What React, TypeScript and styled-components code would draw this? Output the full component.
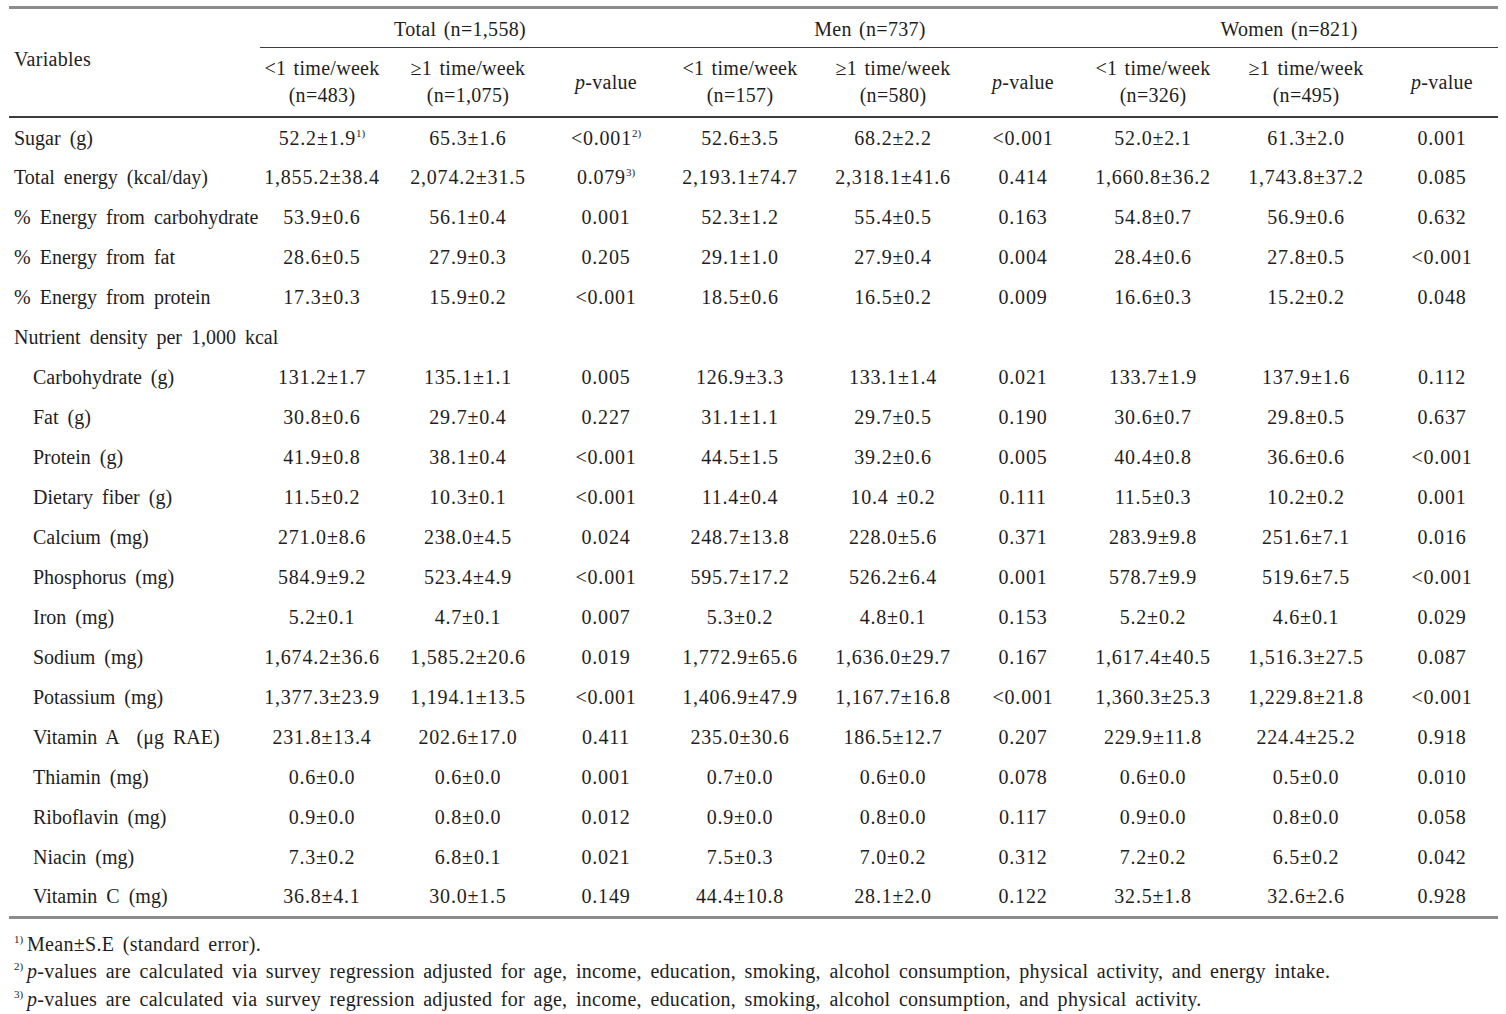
import { FC } from 'react';
import styled, { createGlobalStyle } from 'styled-components';

const GlobalStyle = createGlobalStyle`
  html, body {
    margin: 0;
    padding: 0;
    background: #ffffff;
  }
  body {
    font-family: 'Liberation Serif', 'Times New Roman', serif;
    color: #1e1e1e;
  }
`;

type Cell = { v: string; sup?: string };
type Row = { label: string; indent?: boolean; section?: boolean; cells?: Cell[] };

const c = (v: string, sup?: string): Cell => ({ v, sup });
const r = (label: string, vals: string[], indent = false): Row => ({
  label,
  indent,
  cells: vals.map((v) => c(v)),
});

const rows: Row[] = [
  {
    label: 'Sugar (g)',
    cells: [
      c('52.2±1.9', '1)'),
      c('65.3±1.6'),
      c('<0.001', '2)'),
      c('52.6±3.5'),
      c('68.2±2.2'),
      c('<0.001'),
      c('52.0±2.1'),
      c('61.3±2.0'),
      c('0.001'),
    ],
  },
  {
    label: 'Total energy (kcal/day)',
    cells: [
      c('1,855.2±38.4'),
      c('2,074.2±31.5'),
      c('0.079', '3)'),
      c('2,193.1±74.7'),
      c('2,318.1±41.6'),
      c('0.414'),
      c('1,660.8±36.2'),
      c('1,743.8±37.2'),
      c('0.085'),
    ],
  },
  r('% Energy from carbohydrate', ['53.9±0.6', '56.1±0.4', '0.001', '52.3±1.2', '55.4±0.5', '0.163', '54.8±0.7', '56.9±0.6', '0.632']),
  r('% Energy from fat', ['28.6±0.5', '27.9±0.3', '0.205', '29.1±1.0', '27.9±0.4', '0.004', '28.4±0.6', '27.8±0.5', '<0.001']),
  r('% Energy from protein', ['17.3±0.3', '15.9±0.2', '<0.001', '18.5±0.6', '16.5±0.2', '0.009', '16.6±0.3', '15.2±0.2', '0.048']),
  { label: 'Nutrient density per 1,000 kcal', section: true },
  r('Carbohydrate (g)', ['131.2±1.7', '135.1±1.1', '0.005', '126.9±3.3', '133.1±1.4', '0.021', '133.7±1.9', '137.9±1.6', '0.112'], true),
  r('Fat (g)', ['30.8±0.6', '29.7±0.4', '0.227', '31.1±1.1', '29.7±0.5', '0.190', '30.6±0.7', '29.8±0.5', '0.637'], true),
  r('Protein (g)', ['41.9±0.8', '38.1±0.4', '<0.001', '44.5±1.5', '39.2±0.6', '0.005', '40.4±0.8', '36.6±0.6', '<0.001'], true),
  r('Dietary fiber (g)', ['11.5±0.2', '10.3±0.1', '<0.001', '11.4±0.4', '10.4 ±0.2', '0.111', '11.5±0.3', '10.2±0.2', '0.001'], true),
  r('Calcium (mg)', ['271.0±8.6', '238.0±4.5', '0.024', '248.7±13.8', '228.0±5.6', '0.371', '283.9±9.8', '251.6±7.1', '0.016'], true),
  r('Phosphorus (mg)', ['584.9±9.2', '523.4±4.9', '<0.001', '595.7±17.2', '526.2±6.4', '0.001', '578.7±9.9', '519.6±7.5', '<0.001'], true),
  r('Iron (mg)', ['5.2±0.1', '4.7±0.1', '0.007', '5.3±0.2', '4.8±0.1', '0.153', '5.2±0.2', '4.6±0.1', '0.029'], true),
  r('Sodium (mg)', ['1,674.2±36.6', '1,585.2±20.6', '0.019', '1,772.9±65.6', '1,636.0±29.7', '0.167', '1,617.4±40.5', '1,516.3±27.5', '0.087'], true),
  r('Potassium (mg)', ['1,377.3±23.9', '1,194.1±13.5', '<0.001', '1,406.9±47.9', '1,167.7±16.8', '<0.001', '1,360.3±25.3', '1,229.8±21.8', '<0.001'], true),
  r('Vitamin A \u00a0(μg RAE)', ['231.8±13.4', '202.6±17.0', '0.411', '235.0±30.6', '186.5±12.7', '0.207', '229.9±11.8', '224.4±25.2', '0.918'], true),
  r('Thiamin (mg)', ['0.6±0.0', '0.6±0.0', '0.001', '0.7±0.0', '0.6±0.0', '0.078', '0.6±0.0', '0.5±0.0', '0.010'], true),
  r('Riboflavin (mg)', ['0.9±0.0', '0.8±0.0', '0.012', '0.9±0.0', '0.8±0.0', '0.117', '0.9±0.0', '0.8±0.0', '0.058'], true),
  r('Niacin (mg)', ['7.3±0.2', '6.8±0.1', '0.021', '7.5±0.3', '7.0±0.2', '0.312', '7.2±0.2', '6.5±0.2', '0.042'], true),
  r('Vitamin C (mg)', ['36.8±4.1', '30.0±1.5', '0.149', '44.4±10.8', '28.1±2.0', '0.122', '32.5±1.8', '32.6±2.6', '0.928'], true),
];

// column widths: variables, then 3 groups of (<1, >=1, p)
const colWidths = [251, 124, 168, 108, 160, 146, 114, 146, 160, 112];

const groups = [
  { title: 'Total (n=1,558)', lo: '(n=483)', hi: '(n=1,075)' },
  { title: 'Men (n=737)', lo: '(n=157)', hi: '(n=580)' },
  { title: 'Women (n=821)', lo: '(n=326)', hi: '(n=495)' },
];

const notes = [
  { n: '1)', text: <>Mean±S.E (standard error).</> },
  {
    n: '2)',
    text: (
      <>
        <i>p</i>-values are calculated via survey regression adjusted for age, income, education, smoking,
        alcohol consumption, physical activity, and energy intake.
      </>
    ),
  },
  {
    n: '3)',
    text: (
      <>
        <i>p</i>-values are calculated via survey regression adjusted for age, income, education, smoking,
        alcohol consumption, and physical activity.
      </>
    ),
  },
];

const App: FC = () => (
  <>
    <GlobalStyle />
    <Page>
      <Table>
        <colgroup>
          {colWidths.map((w, i) => (
            <col key={i} style={{ width: w }} />
          ))}
        </colgroup>
        <thead>
          <tr>
            <VarHead rowSpan={2}>Variables</VarHead>
            {groups.map((g) => (
              <GroupHead key={g.title} colSpan={3}>
                {g.title}
              </GroupHead>
            ))}
          </tr>
          <tr>
            {groups.map((g) => [
              <SubHead key={g.title + 'lo'}>
                &lt;1 time/week
                <br />
                {g.lo}
              </SubHead>,
              <SubHead key={g.title + 'hi'}>
                ≥1 time/week
                <br />
                {g.hi}
              </SubHead>,
              <SubHead key={g.title + 'p'}>
                <i>p</i>-value
              </SubHead>,
            ])}
          </tr>
        </thead>
        <tbody>
          {rows.map((row, ri) => (
            <DataRow key={ri} $last={ri === rows.length - 1}>
              {row.section ? (
                <Label colSpan={10}>{row.label}</Label>
              ) : (
                <>
                  <Label $indent={row.indent}>{row.label}</Label>
                  {row.cells!.map((cell, ci) => (
                    <Value key={ci}>
                      {cell.v}
                      {cell.sup && <Sup>{cell.sup}</Sup>}
                    </Value>
                  ))}
                </>
              )}
            </DataRow>
          ))}
        </tbody>
      </Table>
      <Notes>
        {notes.map((note) => (
          <Note key={note.n}>
            <NoteMark>{note.n}</NoteMark>
            {note.text}
          </Note>
        ))}
      </Notes>
    </Page>
  </>
);

export default App;

const Page = styled.div`
  padding: 6px 8px 0 9px;
  width: 1489px;
  font-size: 20px;
  line-height: 22px;
  letter-spacing: 0.3px;
  word-spacing: 2px;
`;

const Table = styled.table`
  width: 1489px;
  table-layout: fixed;
  border-collapse: collapse;
  border-top: 3px solid #8c8c8c;
`;

const VarHead = styled.th`
  font-weight: normal;
  text-align: left;
  padding: 0 0 8px 5px;
  vertical-align: middle;
  border-bottom: 2px solid #3c3c3c;
`;

const GroupHead = styled.th`
  font-weight: normal;
  text-align: center;
  height: 36px;
  padding: 2px 0 0;
  border-bottom: 1.5px solid #3c3c3c;
`;

const SubHead = styled.th`
  font-weight: normal;
  text-align: center;
  height: 68px;
  padding: 0;
  line-height: 27px;
  border-bottom: 2px solid #3c3c3c;
`;

const DataRow = styled.tr<{ $last?: boolean }>`
  height: 40px;
  ${(p) => (p.$last ? 'border-bottom: 3px solid #8c8c8c;' : '')}
`;

const Label = styled.td<{ $indent?: boolean }>`
  text-align: left;
  white-space: nowrap;
  letter-spacing: 0;
  word-spacing: 4px;
  padding: 0 0 0 ${(p) => (p.$indent ? 24 : 5)}px;
`;

const Value = styled.td`
  text-align: center;
  white-space: nowrap;
  padding: 0;
  letter-spacing: 0.8px;
`;

const Sup = styled.sup`
  font-size: 11px;
  vertical-align: 8px;
  line-height: 0;
  letter-spacing: 0;
  word-spacing: 0;
`;

const Notes = styled.div`
  padding: 12px 0 0 5px;
`;

const Note = styled.div`
  line-height: 27.5px;
  white-space: nowrap;
  word-spacing: 3.2px;
`;

const NoteMark = styled.span`
  display: inline-block;
  width: 13px;
  font-size: 11px;
  line-height: 0;
  letter-spacing: 0;
  vertical-align: 8px;
`;
